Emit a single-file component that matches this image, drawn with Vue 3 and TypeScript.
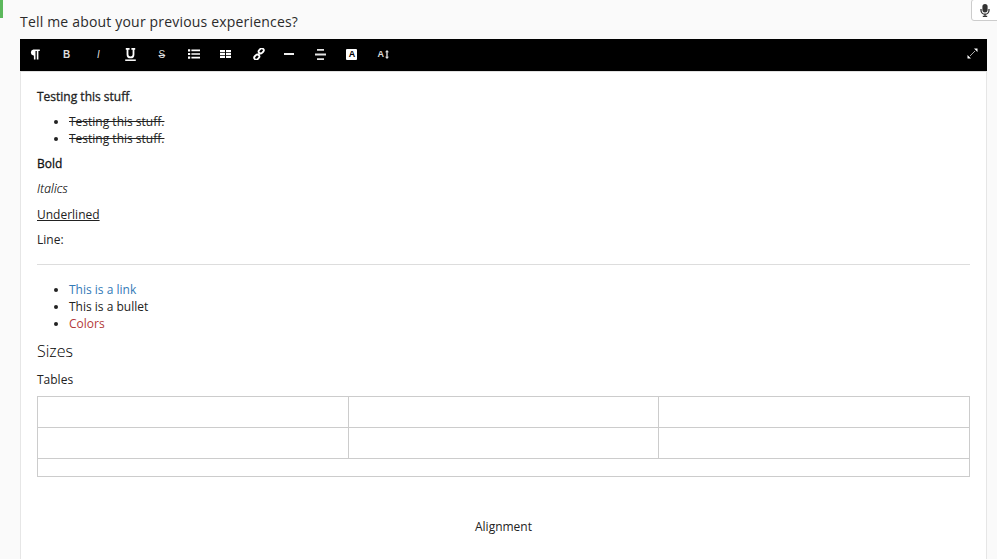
<script setup lang="ts">
const cells: number[] = [1, 2, 3, 4, 5, 6]
</script>

<template>
  <div class="page">
    <div class="accent"></div>
    <button class="mic" aria-label="Voice input">
      <svg width="10" height="13" viewBox="0 0 10 13"><rect x="2.400" y="0" width="5.200" height="8.400" rx="2.600" fill="#333"/><path d="M1 5v1.200a4 4 0 0 0 8 0V5" fill="none" stroke="#333" stroke-width="1.300"/><path d="M5 10v2M2.800 12.400h4.400" stroke="#333" stroke-width="1.300"/></svg>
    </button>
    <label class="question">Tell me about your previous experiences?</label>
    <div class="editor">
      <div class="toolbar">
        <div class="tools">
          <span class="tool first"><svg width="11" height="11" viewBox="0 0 11 11"><path d="M4.300 0.500H10.800V2H9.400V10.500H7.800V2H6.500V10.500H4.900V6.400H4.300A3 3 0 0 1 4.300 0.500Z" fill="#fff"/></svg></span>
          <span class="tool letter bold">B</span>
          <span class="tool letter italic">I</span>
          <span class="tool"><svg width="11" height="13" viewBox="0 0 11 13"><path d="M.8 .9H4.600M6.400 .9H10.200M2.500 .9V6.400a3 3 0 0 0 6 0V.9" fill="none" stroke="#fff" stroke-width="1.800"/><path d="M.2 12.200H10.800" stroke="#fff" stroke-width="1.500"/></svg></span>
          <span class="tool letter"><span class="strike-s">S</span></span>
          <span class="tool"><svg width="12" height="10" viewBox="0 0 12 10"><path d="M0 .3h2.200v2.200H0zM0 3.900h2.200v2.200H0zM0 7.500h2.200v2.200H0zM3.400 .6H12v1.600H3.400zM3.400 4.200H12v1.600H3.400zM3.400 7.800H12v1.600H3.400z" fill="#fff"/></svg></span>
          <span class="tool"><svg width="11" height="8" viewBox="0 0 11 8"><path d="M0 0h5v2.200H0zM6 0h5v2.200H6zM0 3h5v2H0zM6 3h5v2H6zM0 5.800h5V8H0zM6 5.800h5V8H6z" fill="#fff"/></svg></span>
          <span class="tool link-tool"><svg width="12" height="12" viewBox="0 0 12 12"><g fill="none" stroke="#fff" stroke-width="1.800"><rect x="5.400" y="0.900" width="5.600" height="4" rx="2" transform="rotate(-45 8.200 2.900)"/><rect x="1" y="7.100" width="5.600" height="4" rx="2" transform="rotate(-45 3.800 9.100)"/></g><path d="M4.600 7.400 7.400 4.600" stroke="#fff" stroke-width="1.600"/></svg></span>
          <span class="tool"><span class="dash"></span></span>
          <span class="tool"><svg width="11" height="11" viewBox="0 0 11 11"><path d="M2 0h7v1.800H2zM0 4.400h11v2.200H0zM2 9.200h7V11H2z" fill="#e4e4e4"/></svg></span>
          <span class="tool shifted"><span class="fill-a">A</span></span>
          <span class="tool shifted size-tool"><span>A</span><svg width="4" height="9" viewBox="0 0 4 9"><path d="M2 0 4 2.200H2.700v4.600H4L2 9 0 6.800h1.300V2.200H0Z" fill="#ddd"/></svg></span>
        </div>
        <svg class="expand" width="11" height="11" viewBox="0 0 11 11"><path d="M3 8 8 3" stroke="#aaa" stroke-width="1"/><path d="M7 0.500h3.500V4zM0.500 7v3.500H4z" fill="#fff"/></svg>
      </div>
      <div class="content">
        <p class="semi">Testing this stuff.</p>
        <ul>
          <li class="strike">Testing this stuff.</li>
          <li class="strike">Testing this stuff.</li>
        </ul>
        <p class="semi dark">Bold</p>
        <p class="em">Italics</p>
        <p class="under">Underlined</p>
        <p>Line:</p>
        <hr />
        <ul class="after-rule">
          <li class="link">This is a link</li>
          <li>This is a bullet</li>
          <li class="red">Colors</li>
        </ul>
        <h3>Sizes</h3>
        <p>Tables</p>
        <div class="table">
          <div v-for="c in cells" :key="c" class="cell"></div>
          <div class="wide"></div>
        </div>
        <p class="center">Alignment</p>
      </div>
    </div>
  </div>
</template>

<style scoped>
.page {
  position: relative;
  box-sizing: border-box;
  height: 559px;
  overflow: hidden;
  padding: 13px 10px 0 20px;
  background: #fafafa;
  font-family: "Open Sans", sans-serif;
  color: #222;
}
.accent {
  position: absolute;
  left: 0;
  top: 0;
  width: 3px;
  height: 18px;
  background: #5cb85c;
}
.mic {
  position: absolute;
  top: -1px;
  left: 971px;
  width: 30px;
  height: 22px;
  padding: 0 2px 0 0;
  display: flex;
  align-items: center;
  justify-content: center;
  background: #fff;
  border: 1px solid #ccc;
  border-radius: 3px;
}
.question {
  display: block;
  height: 26px;
  font-size: 14px;
  line-height: 17px;
  letter-spacing: 0.185px;
  color: #2b2b2b;
}
.editor {
  height: 520px;
}
.toolbar {
  display: flex;
  align-items: center;
  justify-content: space-between;
  box-sizing: border-box;
  height: 32px;
  padding: 0 9px 2px 0;
  background: #000;
}
.tools {
  display: flex;
  align-items: center;
  height: 100%;
}
.tool {
  box-sizing: border-box;
  display: flex;
  align-items: center;
  justify-content: center;
  width: 31.750px;
  height: 100%;
  color: #fff;
}
.first { padding-right: 2px; }
.link-tool { padding-left: 3px; }
.letter {
  font-family: "Liberation Sans", sans-serif;
  font-size: 10px;
  color: #ddd;
}
.bold { font-weight: 700; margin-left: -1px; }
.italic { font-style: italic; }
.strike-s { text-decoration: line-through; }
.shifted { margin-left: -0.500px; }
.dash {
  display: block;
  width: 10px;
  height: 2.500px;
  background: #eee;
}
.fill-a {
  display: flex;
  align-items: center;
  justify-content: center;
  width: 11px;
  height: 11px;
  border-radius: 1px;
  background: #fff;
  color: #000;
  font-family: "Liberation Sans", sans-serif;
  font-size: 9px;
  font-weight: 700;
}
.size-tool {
  gap: 1px;
  font-family: "Liberation Sans", sans-serif;
  font-size: 9px;
  font-weight: 700;
  color: #ddd;
}
.expand {
  margin-bottom: 2px;
}
.content {
  box-sizing: border-box;
  height: 100%;
  padding: 16px 16px 0;
  background: #fff;
  border: 1px solid #e6e6e6;
  border-top-color: #e0e0e0;
  font-size: 12px;
  line-height: 17px;
  color: #222;
}
p {
  margin: 0 0 8px;
}
.semi {
  -webkit-text-stroke: 0.300px currentColor;
}
.dark { color: #111; }
.em {
  margin-bottom: 9px;
  font-style: italic;
  font-weight: 300;
  letter-spacing: 0.200px;
  color: #000;
  -webkit-text-stroke: 0.150px #000;
}
.under { text-decoration: underline; }
ul {
  margin: 0 0 8px;
  padding-left: 32px;
}
li::marker { color: #222; }
.strike { text-decoration: line-through; }
hr {
  margin: 16px 0;
  border: 0;
  border-top: 1px solid #ddd;
}
.link { color: #337ab7; }
.red { color: #b33a3a; }
h3 {
  margin: 9px 0 10px;
  font-size: 16px;
  line-height: 20px;
  font-weight: 300;
  color: #000;
}
.table {
  display: grid;
  grid-template-columns: 311px 310px 1fr;
  grid-template-rows: 31px 31px 17px;
  margin-bottom: 41px;
  border: 1px solid #ccc;
}
.cell {
  border-bottom: 1px solid #ccc;
  border-right: 1px solid #ccc;
}
.cell:nth-child(3n) { border-right: 0; }
.wide { grid-column: 1 / -1; }
.center { text-align: center; }
</style>
